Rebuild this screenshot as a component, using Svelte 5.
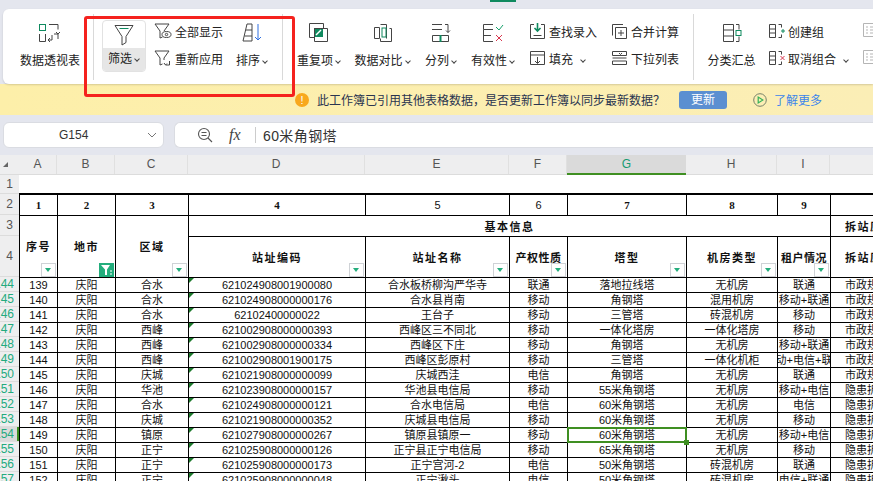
<script>
  const columns = [
    { key: "A", cls: "ca" }, { key: "B", cls: "cb" }, { key: "C", cls: "cc" }, { key: "D", cls: "cd" },
    { key: "E", cls: "ce" }, { key: "F", cls: "cf" }, { key: "G", cls: "cg" }, { key: "H", cls: "ch" },
    { key: "I", cls: "ci" }, { key: "J", cls: "cj" }
  ];

  // row number, then the cell values A..J
  const rows = [
    [144, "139", "庆阳", "合水", "621024908001900080", "合水板桥柳沟严华寺", "联通", "落地拉线塔", "无机房", "联通", "市政规划拆除"],
    [145, "140", "庆阳", "合水", "621024908000000176", "合水县肖南", "移动", "角钢塔", "混用机房", "移动+联通", "市政规划拆除"],
    [146, "141", "庆阳", "合水", "62102400000022", "王台子", "移动", "三管塔", "砖混机房", "移动", "市政规划拆除"],
    [147, "142", "庆阳", "西峰", "621002908000000393", "西峰区三不同北", "移动", "一体化塔房", "一体化塔房", "移动", "市政规划拆除"],
    [148, "143", "庆阳", "西峰", "621002908000000334", "西峰区下庄", "移动", "角钢塔", "无机房", "移动+联通", "市政规划拆除"],
    [149, "144", "庆阳", "西峰", "621002908001900175", "西峰区彭原村", "移动", "三管塔", "一体化机柜", "移动+电信+联通", "市政规划拆除"],
    [150, "145", "庆阳", "庆城", "621021908000000099", "庆城西洼", "电信", "角钢塔", "无机房", "联通", "市政规划拆除"],
    [151, "146", "庆阳", "华池", "621023908000000157", "华池县电信局", "移动", "55米角钢塔", "无机房", "移动+电信", "隐患拆除站"],
    [152, "147", "庆阳", "合水", "621024908000000121", "合水电信局", "电信", "60米角钢塔", "无机房", "电信", "隐患拆除站"],
    [153, "148", "庆阳", "庆城", "621021908000000352", "庆城县电信局", "移动", "60米角钢塔", "无机房", "移动", "隐患拆除站"],
    [154, "149", "庆阳", "镇原", "621027908000000267", "镇原县镇原一", "移动", "60米角钢塔", "无机房", "移动+电信", "隐患拆除站"],
    [155, "150", "庆阳", "正宁", "621025908000000126", "正宁县正宁电信局", "移动", "65米角钢塔", "无机房", "移动", "隐患拆除站"],
    [156, "151", "庆阳", "正宁", "621025908000000173", "正宁宫河-2", "电信", "50米角钢塔", "砖混机房", "联通", "隐患拆除站"],
    [157, "152", "庆阳", "正宁", "621025908000000048", "正宁湫头", "电信", "50米角钢塔", "砖混机房", "电信+联通", "隐患拆除站"]
  ];
</script>

<div class="page">
  <div class="topstrip"><span class="tabmark"></span></div>

  <div class="toolbar">
    <div class="big pivot">
      <svg width="24" height="20" viewBox="0 0 24 20" class="ink">
        <rect x="1.500" y="1.500" width="6" height="6" stroke="#0f8a5f" />
        <path d="M11 1.500h9v5M1.500 11v7.500h6V11M14 12v5h-4M20 16v-5h-4M12 15l-2 2 2 2M18 9l2 2 2-2" />
      </svg>
      <span>数据透视表</span>
    </div>
    <div class="sep m12"></div>

    <div class="filterbtn m8">
      <div class="filtertop">
        <svg width="20" height="22" viewBox="0 0 20 22" class="ink">
          <path d="M1 1.500h18l-7 11v6l-4 2.500v-8.500z" />
          <path d="M5.500 4.500h9" stroke="#0f8a5f" />
        </svg>
      </div>
      <div class="filterlabel">筛选<i class="caret"></i></div>
    </div>

    <div class="stack m8 w68">
      <div class="small">
        <svg width="18" height="18" viewBox="0 0 18 18" class="ink">
          <path d="M1 2h14l-5 7M1 2l5 7v7l2.500-1" />
          <ellipse cx="12.500" cy="12.500" rx="4.500" ry="3" />
          <circle cx="12.500" cy="12.500" r="1.200" />
        </svg>
        <span>全部显示</span>
      </div>
      <div class="small">
        <svg width="18" height="18" viewBox="0 0 18 18" class="ink">
          <path d="M1 2h14l-5 7v2M1 2l5 7v7l2.500-1" />
          <path d="M15.500 12v4h-4M10 14l1.500 2 1.500-1.500" />
        </svg>
        <span>重新应用</span>
      </div>
    </div>

    <div class="big sort m14">
      <svg width="20" height="20" viewBox="0 0 20 20" class="ink">
        <path d="M5 1h5v17H1zM4 7h6M2.500 13H10" />
        <path d="M16 1v16M13 14l3 3 3-3" stroke="#2f6fe0" />
      </svg>
      <span>排序<i class="caret"></i></span>
    </div>
    <div class="sep m14"></div>

    <div class="big dup m13">
      <svg width="20" height="20" viewBox="0 0 20 20" class="ink">
        <rect x="5.500" y="5.500" width="8" height="8" fill="#0f8a5f" stroke="#0f8a5f" />
        <path d="M7 12l5-5" stroke="#fff" stroke-width="1.400" />
        <path d="M14.500 5.500V.5H.5v14h5M5.500 5.500h13v13h-13z" />
      </svg>
      <span>重复项<i class="caret"></i></span>
    </div>

    <div class="big compare m12">
      <svg width="20" height="20" viewBox="0 0 20 20" class="ink">
        <path d="M1.500 4.500h5v11h-5zM7.500 1.500h6v14M7.500 15.500v3h11v-13h-2" />
        <rect x="9" y="5" width="4" height="9" stroke="#0f8a5f" />
      </svg>
      <span>数据对比<i class="caret"></i></span>
    </div>

    <div class="big split m13">
      <svg width="20" height="20" viewBox="0 0 20 20" class="ink">
        <path d="M1 1.500h10M1 6.500h10M14 1.500h3v8M15 7.500l2 2 2-2M1.500 12.500h16v6h-16z" />
        <path d="M9.500 12v7" stroke="#0f8a5f" stroke-width="2" />
      </svg>
      <span>分列<i class="caret"></i></span>
    </div>

    <div class="big valid m13">
      <svg width="22" height="20" viewBox="0 0 22 20" class="ink">
        <path d="M11 1.500H1.500v5H11M1.500 6.500v12H11M1.500 12.500H9" />
        <path d="M14 4l3 3 4-5" stroke="#15a06b" />
        <path d="M14 12l6 6M20 12l-6 6" stroke="#d8374f" />
      </svg>
      <span>有效性<i class="caret"></i></span>
    </div>

    <div class="stack m14 w67">
      <div class="small">
        <svg width="17" height="18" viewBox="0 0 17 18" class="ink">
          <path d="M5 2.500H1.500v14h14v-14H12M4.500 13.500h8" />
          <path d="M8.500 1v7M5.500 6l3 3 3-3" stroke="#0f8a5f" stroke-width="1.600" />
        </svg>
        <span>查找录入</span>
      </div>
      <div class="small">
        <svg width="17" height="16" viewBox="0 0 17 16" class="ink">
          <path d="M1.500 1.500h14v13h-14zM1.500 5h14M8.500 7v6M6 11l2.500 2.500L11 11" />
        </svg>
        <span>填充<i class="caret wide"></i></span>
      </div>
    </div>

    <div class="stack m15 w69">
      <div class="small">
        <svg width="17" height="17" viewBox="0 0 17 17" class="ink">
          <path d="M12 1.500H1.500v11M4.500 15.500v-11h11v11zM10 7v6M7 10h6" />
        </svg>
        <span>合并计算</span>
      </div>
      <div class="small">
        <svg width="17" height="16" viewBox="0 0 17 16" class="ink">
          <path d="M1.500 1.500h14v4h-14zM1.500 8h14M1.500 11h14v3.500h-14z" />
          <path d="M8 3l1.500 1.500L11 3" />
        </svg>
        <span>下拉列表</span>
      </div>
    </div>
    <div class="sep m13"></div>

    <div class="big subtotal m13">
      <svg width="20" height="20" viewBox="0 0 20 20" class="ink">
        <path d="M1.500 1.500h10v17h-10zM1.500 7h10M1.500 13h10M14 1.500h3v5M14 18.500h3v-5" />
        <rect x="14" y="7.500" width="5" height="5" stroke="#0f8a5f" />
      </svg>
      <span>分类汇总</span>
    </div>

    <div class="stack m12 w80">
      <div class="small">
        <svg width="17" height="16" viewBox="0 0 17 16" class="ink">
          <path d="M1.500 1.500h6v13h-6zM1.500 6h6M1.500 10h6M10.500 1.500h3v3M10.500 14.500h3v-3" />
          <path d="M13 8h4M15 6v4" stroke="#0f8a5f" />
        </svg>
        <span>创建组</span>
      </div>
      <div class="small">
        <svg width="17" height="16" viewBox="0 0 17 16" class="ink">
          <path d="M1.500 1.500h6v13h-6zM1.500 6h6M1.500 10h6M10.500 1.500h3v3M10.500 14.500h3v-3" />
          <path d="M12.500 6l4 4M16.500 6l-4 4" stroke="#d8374f" />
        </svg>
        <span>取消组合<i class="caret wide"></i></span>
      </div>
    </div>

    <div class="stack m15 ghost">
      <svg width="14" height="16" viewBox="0 0 14 16" class="ink">
        <path d="M.5 1.500h13v13H.5zM3 5h2M7 5h5M3 8h2M7 8h5M3 11h2M7 11h5" />
      </svg>
      <svg width="14" height="16" viewBox="0 0 14 16" class="ink">
        <path d="M.5 1.500h13v13H.5zM3 5h2M7 5h5M3 8h2M7 8h5M3 11h2M7 11h5" />
      </svg>
    </div>
  </div>

  <div class="notice">
    <span class="warn">!</span>
    <span class="msg">此工作簿已引用其他表格数据，是否更新工作簿以同步最新数据？</span>
    <button class="update">更新</button>
    <svg class="play" width="14" height="14" viewBox="0 0 14 14">
      <circle cx="7" cy="7" r="6.300" fill="none" stroke="#77806a" />
      <path d="M5.200 4v6l4.600-3z" fill="none" stroke="#35b25a" stroke-width="1.200" />
    </svg>
    <span class="more">了解更多</span>
  </div>

  <div class="formula">
    <div class="namebox">
      <span>G154</span>
      <svg width="10" height="6" viewBox="0 0 10 6"><path d="M1 1l4 4 4-4" fill="none" stroke="#777" /></svg>
    </div>
    <div class="fbox">
      <svg width="16" height="16" viewBox="0 0 16 16" fill="none" stroke="#555" stroke-width="1.100">
        <circle cx="7" cy="7" r="5.500" /><path d="M4.500 5.500h5M4.500 8.500h5M11 11l4 4" />
      </svg>
      <span class="fx">fx</span>
      <span class="fsep"></span>
      <span class="ftext">60米角钢塔</span>
    </div>
  </div>

  <div class="colheads">
    <div class="corner"><i></i></div>
    {#each columns as c}
      <div class={"colhead " + c.cls} class:active={c.key === "G"}>{c.key}</div>
    {/each}
  </div>

  <div class="sheet">
    <div class="gutter">
      <div class="rn h1">1</div>
      <div class="rn h2">2</div>
      <div class="rn h3">3</div>
      <div class="rn h4">4</div>
      {#each rows as r}
        <div class="rn data" class:cur={r[0] === 154}><span>{r[0]}</span></div>
      {/each}
    </div>

    <table>
      <colgroup>
        {#each columns as c}<col class={c.cls} />{/each}
      </colgroup>
      <tbody>
        <tr class="r1"><td class="blank" colspan="10"></td></tr>
        <tr class="r2">
          <td class="num">1</td><td class="num">2</td><td class="num">3</td><td class="num">4</td>
          <td class="num sans">5</td><td class="num sans">6</td>
          <td class="num">7</td><td class="num">8</td><td class="num">9</td><td class="num">10</td>
        </tr>
        <tr class="r3">
          <td class="hd" rowspan="2">序号<i class="fbtn"></i></td>
          <td class="hd" rowspan="2">地市<i class="fbtn on"><svg width="12" height="12" viewBox="0 0 12 12"><path d="M0 1h9L6 5.500V11H4V5.500z" fill="#fff" /><path d="M9 7h2M9 10h2" stroke="#fff" /></svg></i></td>
          <td class="hd" rowspan="2">区域<i class="fbtn"></i></td>
          <td class="hd" colspan="6">基本信息</td>
          <td class="hd left">拆站原因</td>
        </tr>
        <tr class="r4">
          <td class="hd">站址编码<i class="fbtn"></i></td>
          <td class="hd">站址名称<i class="fbtn"></i></td>
          <td class="hd tight">产权性质<i class="fbtn"></i></td>
          <td class="hd">塔型<i class="fbtn"></i></td>
          <td class="hd">机房类型<i class="fbtn"></i></td>
          <td class="hd tight">租户情况<i class="fbtn"></i></td>
          <td class="hd left">拆站原因</td>
        </tr>
        {#each rows as r}
          <tr class="rd">
            {#each r.slice(1) as v, i}
              <td class:mark={i === 3} class:sel={r[0] === 154 && i === 6} class:left={i === 9}>
                <div class="cell">{v}</div>
              </td>
            {/each}
          </tr>
        {/each}
      </tbody>
    </table>
  </div>

  <div class="annot"></div>
</div>

<style>
  :global(body) {
    margin: 0;
    overflow: hidden;
    background: #fff;
  }

  .page {
    position: relative;
    width: 873px;
    height: 481px;
    overflow: hidden;
    font-family: "Liberation Sans", "Noto Sans CJK SC", sans-serif;
    font-size: 12px;
    color: #222;
    background: #e4e6ee;
  }

  .topstrip {
    height: 9px;
    padding-left: 490px;
  }
  .tabmark {
    display: block;
    width: 26px;
    height: 2px;
    background: #0f8a5f;
  }

  .toolbar {
    display: flex;
    height: 75px;
    margin-left: 3px;
    padding-left: 16px;
    box-sizing: border-box;
    background: #fff;
    border-radius: 6px 0 0 6px;
    box-shadow: 0 1px 2px rgba(0, 0, 0, 0.15);
    position: relative;
    overflow: hidden;
  }
  .toolbar > * {
    flex: none;
  }
  .ink {
    fill: none;
    stroke: #444;
    stroke-width: 1;
    flex: none;
  }
  .m8 { margin-left: 8px; }
  .m12 { margin-left: 12px; }
  .m13 { margin-left: 13px; }
  .m14 { margin-left: 14px; }
  .m15 { margin-left: 15px; }

  .sep {
    width: 1px;
    height: 66px;
    margin-top: 5px;
    background: #d9d9d9;
  }

  .big {
    display: flex;
    flex-direction: column;
    align-items: center;
    padding-top: 14px;
    white-space: nowrap;
  }
  .big svg { height: 20px; margin-bottom: 10px; }
  .big span { line-height: 17px; }
  .pivot { width: 62px; }
  .sort { width: 32px; }
  .dup { width: 46px; }
  .compare { width: 57px; }
  .split { width: 34px; }
  .valid { width: 44px; }
  .subtotal { width: 49px; }

  .caret {
    display: inline-block;
    width: 3px;
    height: 3px;
    margin: 0 1px 2px 3px;
    border-right: 1.500px solid #444;
    border-bottom: 1.500px solid #444;
    transform: rotate(45deg);
  }
  .caret.wide { margin-left: 8px; }

  .filterbtn {
    width: 44px;
    height: 52px;
    margin-top: 11px;
    box-sizing: border-box;
    border: 1px solid #e2e2e2;
    border-radius: 4px;
    overflow: hidden;
    display: flex;
    flex-direction: column;
  }
  .filtertop {
    height: 28px;
    display: flex;
    align-items: flex-start;
    justify-content: center;
    padding-top: 3px;
    box-sizing: border-box;
  }
  .filterlabel {
    flex: 1;
    background: #e6e6e6;
    text-align: center;
    line-height: 23px;
    white-space: nowrap;
  }

  .stack {
    display: flex;
    flex-direction: column;
    padding-top: 13px;
    gap: 9px;
  }
  .w68 { width: 68px; }
  .w67 { width: 67px; }
  .w69 { width: 69px; }
  .w80 { width: 80px; }
  .small {
    display: flex;
    align-items: center;
    gap: 3px;
    height: 18px;
    white-space: nowrap;
  }
  .ghost { gap: 11px; }
  .ghost .ink { stroke: #b5b5b5; }

  .notice {
    display: flex;
    align-items: center;
    height: 31px;
    padding-left: 295px;
    box-sizing: border-box;
    background: linear-gradient(90deg, #fdefa9, #fbeeb6);
    color: #2a3450;
  }
  .warn {
    width: 14px;
    height: 14px;
    border-radius: 50%;
    background: #f8a81c;
    color: #fff;
    font-size: 11px;
    line-height: 14px;
    text-align: center;
    flex: none;
  }
  .msg { margin-left: 8px; width: 362px; white-space: nowrap; }
  .update {
    width: 48px;
    height: 18px;
    padding: 0;
    border: none;
    border-radius: 3px;
    background: #5b8fd1;
    color: #fff;
    font: inherit;
    line-height: 18px;
  }
  .play { margin-left: 26px; }
  .more { margin-left: 7px; color: #3d86ea; }

  .formula {
    display: flex;
    gap: 10px;
    height: 40px;
    padding: 7px 0 7px 3px;
    box-sizing: border-box;
  }
  .namebox {
    width: 161px;
    display: flex;
    align-items: center;
    box-sizing: border-box;
    padding: 0 6px 0 55px;
    justify-content: space-between;
    background: #fff;
    border: 1px solid #dadce2;
    border-radius: 6px;
    font-size: 12px;
    color: #333;
  }
  .fbox {
    flex: 1;
    display: flex;
    align-items: center;
    background: #fff;
    border: 1px solid #dadce2;
    border-right: none;
    border-radius: 6px 0 0 6px;
    padding-left: 22px;
  }
  .fx {
    margin-left: 16px;
    font-family: "Liberation Serif", serif;
    font-style: italic;
    font-size: 16px;
    color: #444;
    width: 17px;
  }
  .fsep {
    width: 1px;
    height: 16px;
    margin-left: 9px;
    background: #ccc;
  }
  .ftext {
    margin-left: 7px;
    font-size: 14px;
    letter-spacing: 0.4px;
    color: #333;
  }

  .colheads {
    display: flex;
    height: 20px;
    background: #eeeeef;
    border-bottom: 1px solid #dcdcdc;
    box-sizing: border-box;
    font-size: 12px;
    color: #555;
  }
  .corner {
    width: 19px;
    flex: none;
    position: relative;
  }
  .corner i {
    position: absolute;
    left: 3px;
    top: 7px;
    border-left: 5px solid transparent;
    border-bottom: 5px solid #666;
  }
  .colhead {
    flex: none;
    box-sizing: border-box;
    text-align: center;
    line-height: 19px;
    border-right: 1px solid #e0e0e0;
  }
  .colhead.active {
    background: #dadada;
    color: #169a72;
    height: 20px;
    border-right: none;
    border-bottom: 2px solid #3f8f22;
  }
  .colhead.ca, col.ca { width: 38px; }
  .colhead.cb, col.cb { width: 58px; }
  .colhead.cc, col.cc { width: 73px; }
  .colhead.cd, col.cd { width: 177px; }
  .colhead.ce, col.ce { width: 144px; }
  .colhead.cf, col.cf { width: 58px; }
  .colhead.cg, col.cg { width: 119px; }
  .colhead.ch, col.ch { width: 91px; }
  .colhead.ci, col.ci { width: 53px; }
  .colhead.cj, col.cj { width: 96px; }

  .sheet {
    display: flex;
    align-items: flex-start;
    background: #fff;
  }
  .gutter {
    width: 19px;
    flex: none;
    background: #eeeeef;
    color: #555;
  }
  .rn {
    box-sizing: border-box;
    border-bottom: 1px solid #dcdcdc;
    display: flex;
    align-items: center;
    justify-content: center;
    overflow: hidden;
    font-size: 12px;
  }
  .h1 { height: 19px; }
  .h2 { height: 21px; }
  .h3 { height: 21px; }
  .h4 { height: 41px; }
  .rn.data {
    height: 15px;
    color: #23ab7e;
    justify-content: flex-start;
  }
  .rn.data span { margin-left: -6px; }
  .rn.cur {
    background: #dadada;
    box-shadow: inset -2px 0 0 #3f8f22;
  }

  table {
    border-collapse: collapse;
    table-layout: fixed;
    width: 907px;
    flex: none;
    font-size: 11px;
    color: #111;
  }
  td {
    border: 1px solid #000;
    padding: 0;
    text-align: center;
    position: relative;
    overflow: hidden;
    white-space: nowrap;
    box-sizing: border-box;
  }
  .r1 { height: 19px; }
  .r1 td {
    border: none;
    border-bottom: 2px solid #000;
  }
  .r2 { height: 21px; }
  .r3 { height: 21px; }
  .r4 { height: 41px; }
  .rd { height: 15px; }
  .num {
    font-family: "Liberation Serif", serif;
    font-size: 11px;
    font-weight: 700;
  }
  .num.sans {
    font-family: "Liberation Sans", sans-serif;
    font-weight: 400;
  }
  .hd {
    font-family: "Noto Sans CJK SC", sans-serif;
    font-weight: 700;
    letter-spacing: 1.500px;
  }
  .hd.tight { letter-spacing: 0.500px; }
  .left { text-align: left; padding-left: 14px; }

  .cell {
    display: flex;
    justify-content: center;
    line-height: 14px;
    height: 14px;
  }
  .left .cell { justify-content: flex-start; }

  .fbtn {
    position: absolute;
    right: 1px;
    bottom: 0;
    width: 15px;
    height: 14px;
    box-sizing: border-box;
    background: #fff;
    border: 1px solid #cfd2d6;
  }
  .fbtn::after {
    content: "";
    position: absolute;
    left: 3px;
    top: 4px;
    border-left: 3.500px solid transparent;
    border-right: 3.500px solid transparent;
    border-top: 4px solid #23ad7c;
  }
  .fbtn.on {
    background: #23ad7c;
    border-color: #23ad7c;
    display: flex;
    align-items: center;
    justify-content: center;
  }
  .fbtn.on::after { display: none; }

  .mark::before {
    content: "";
    position: absolute;
    left: 0;
    top: 0;
    border-top: 5px solid #1c7a2c;
    border-right: 5px solid transparent;
  }
  td.sel {
    overflow: visible;
    z-index: 2;
  }
  .sel::after {
    content: "";
    position: absolute;
    inset: -1px;
    border: 2px solid #3f8f22;
  }
  .sel .cell::after {
    content: "";
    position: absolute;
    right: -3px;
    bottom: -3px;
    width: 5px;
    height: 5px;
    background: #3f8f22;
    z-index: 1;
  }

  .annot {
    position: absolute;
    left: 84px;
    top: 16px;
    width: 211px;
    height: 81px;
    box-sizing: border-box;
    border: 3px solid #f5221e;
    border-radius: 3px;
    pointer-events: none;
  }
</style>
